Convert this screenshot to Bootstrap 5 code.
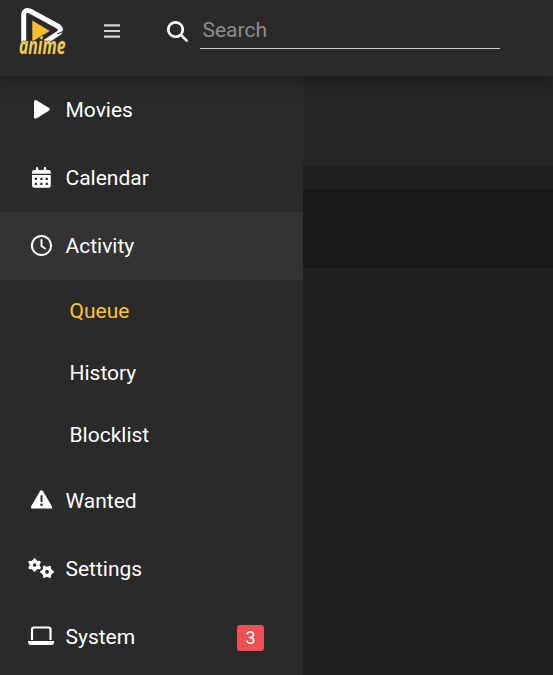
<!DOCTYPE html>
<html lang="en" data-bs-theme="dark">
<head>
<meta charset="utf-8">
<meta name="viewport" content="width=device-width, initial-scale=1">
<title>Queue</title>
<link href="https://cdn.jsdelivr.net/npm/bootstrap@5.3.0/dist/css/bootstrap.min.css" rel="stylesheet">
<style>
body { background: #202020; color: #fff; font-family: Roboto, sans-serif; font-size: 21px; line-height: 30px; }
.topbar { height: 76px; background: #2a2a2a; box-shadow: 0 0 20px 5px rgba(0,0,0,.29); z-index: 2; }
.brand-logo { width: 50px; height: 64px; margin: 0 0 0 18px; overflow: visible; }
.menu-toggle { width: 16px; height: 14px; margin: 24px 0 0 36px; }
.search-icon { width: 21px; height: 21px; margin: 21px 0 0 47px; }
.search-input { width: 300px; height: 37px; margin: 12px 0 0 12px; padding: 0 3px 0 2.5px; border: 0; border-bottom: 1px solid #d0d0d0; border-radius: 0; background: none; color: #fff; font-size: 21px; line-height: 36px; outline: 0; }
.search-input::placeholder { color: #8c8c8c; opacity: 1; }
.side { width: 303px; background: #2a2a2a; }
.side .nav-link { height: 68px; padding: 0; color: #fff; }
.side .nav-link.active { background: #333; }
.side svg { width: 30px; height: 24px; margin: 0 9.5px 0 26px; }
.sub { padding-bottom: 1px; }
.side .sub .nav-link { height: 62px; padding-left: 69.5px; }
.side .sub .current { color: #ffc230; }
.count { width: 27px; height: 26px; margin: 1px 39px 0 0; border-radius: 3px; background: #f05050; font-size: 18px; }
.toolbar-band { height: 90px; background: #262626; }
.table-band { height: 79px; margin-top: 23px; background: #191919; }
</style>
<script src="https://cdn.jsdelivr.net/npm/bootstrap@5.3.0/dist/js/bootstrap.bundle.min.js"></script>
</head>
<body class="vh-100 overflow-hidden d-flex flex-column">
<header class="topbar d-flex align-items-start position-relative flex-shrink-0">
  <a href="#" class="d-flex" aria-label="Home">
    <svg class="brand-logo" viewBox="18 0 50 64">
      <path d="M23.700 43V14.500q.5-5.500 6.300-3.500L57.500 26q3 1.800 3 4 0 2-2.500 3.600L45 42" fill="none" stroke="#fff" stroke-width="5" stroke-linejoin="round"/>
      <path d="M57.500 34l6.500-3" stroke="#2a2a2a" stroke-width="1.200"/>
      <path d="M32.300 20.500v21l17.500-10.500z" fill="#fdbc2c"/>
      <text x="19" y="53.700" textLength="46.500" lengthAdjust="spacingAndGlyphs" font-family="Open Sans, sans-serif" font-weight="700" font-style="italic" font-size="23.500" fill="#f0ca58" stroke="#45401f" stroke-width="1.200" paint-order="stroke">anime</text>
    </svg>
  </a>
  <svg class="menu-toggle" viewBox="0 0 16 14"><path d="M0 1.300h16M0 7h16M0 12.700h16" stroke="#d2d2d2" stroke-width="2.200"/></svg>
  <svg class="search-icon" viewBox="0 0 512 512" fill="#fff"><path d="M416 208c0 45.900-14.900 88.300-40 122.700L502.600 457.400c12.500 12.500 12.500 32.800 0 45.300s-32.800 12.500-45.300 0L330.700 376c-34.400 25.200-76.800 40-122.700 40C93.100 416 0 322.900 0 208S93.100 0 208 0s208 93.100 208 208zM208 352a144 144 0 1 0 0-288 144 144 0 1 0 0 288z"/></svg>
  <input class="search-input" type="text" placeholder="Search" aria-label="Search">
</header>
<div class="d-flex flex-grow-1">
  <nav class="side nav flex-column flex-nowrap flex-shrink-0">
    <a class="nav-link d-flex align-items-center" href="#">
      <svg viewBox="0 0 30 24"><path d="M8 4.300Q8 1 10.800 2.500l12 7.300q2.200 1.500 0 3L10.800 20.300Q8 21.700 8 18.500z" fill="#fff"/></svg>Movies</a>
    <a class="nav-link d-flex align-items-center" href="#">
      <svg viewBox="0 0 30 24"><path fill="#fff" fill-rule="evenodd" d="M6 7.800V6q0-2 2-2h2V2.300q0-1.300 1.100-1.300t1.200 1.300V4h5.500V2.300Q17.800 1 19 1t1.200 1.300V4h2.300q2.300 0 2.300 2v1.800zM6 9h18.800v10.500q0 2.300-2.300 2.300H8.300Q6 21.800 6 19.500zM8.800 11.700v2.200H11v-2.200zm5.500 0v2.200h2.200v-2.200zm5.400 0v2.200h2.200v-2.200zM8.800 16.800V19H11v-2.200zm5.500 0V19h2.200v-2.200zm5.400 0V19h2.200v-2.200z"/></svg>Calendar</a>
    <a class="nav-link active d-flex align-items-center" href="#">
      <svg viewBox="0 0 30 24" fill="none" stroke="#fff" stroke-width="2" stroke-linecap="round"><circle cx="15.500" cy="11.500" r="9.600"/><path d="M15.500 6v6l3.600 2.500"/></svg>Activity</a>
    <div class="sub">
      <a class="nav-link current d-flex align-items-center" href="#">Queue</a>
      <a class="nav-link d-flex align-items-center" href="#">History</a>
      <a class="nav-link d-flex align-items-center" href="#">Blocklist</a>
    </div>
    <a class="nav-link d-flex align-items-center" href="#">
      <svg viewBox="0 0 30 24"><path d="M14 2.200q1.500-2 3 0l8.700 14.800q1.200 2.600-1.500 2.600H6.800q-2.700 0-1.500-2.600z" fill="#fff"/><path d="M15.500 7v5.300" stroke="#2a2a2a" stroke-width="2" stroke-linecap="round"/><circle cx="15.500" cy="15.700" r="1.300" fill="#2a2a2a"/></svg>Wanted</a>
    <a class="nav-link d-flex align-items-center" href="#">
      <svg viewBox="0 0 30 24">
        <defs><g id="gear"><circle r="3.800" fill="none" stroke="#fff" stroke-width="3.600"/><path d="M0-4v-1.500M3.500-2l1.400-.8M3.500 2l1.400.8M0 4v1.500M-3.500 2l-1.400.8M-3.500-2l-1.400-.8" stroke="#fff" stroke-width="3.500" stroke-linecap="round"/></g></defs>
        <use href="#gear" transform="translate(8.600 8) scale(.93)"/><use href="#gear" transform="translate(21 14.800) rotate(30) scale(.93)"/></svg>Settings</a>
    <a class="nav-link d-flex align-items-center" href="#">
      <svg viewBox="0 0 30 24"><path d="M6 15V4.500q0-2 2-2h14.500q2 0 2 2V15" fill="none" stroke="#fff" stroke-width="2.200"/><path d="M2 16h26.200v.7q0 3.400-3.400 3.400H5.400Q2 20.100 2 16.700z" fill="#fff"/></svg>System
      <span class="count badge fw-normal p-0 ms-auto d-flex align-items-center justify-content-center">3</span></a>
  </nav>
  <main class="flex-grow-1">
    <div class="toolbar-band"></div>
    <div class="table-band"></div>
  </main>
</div>
</body>
</html>
